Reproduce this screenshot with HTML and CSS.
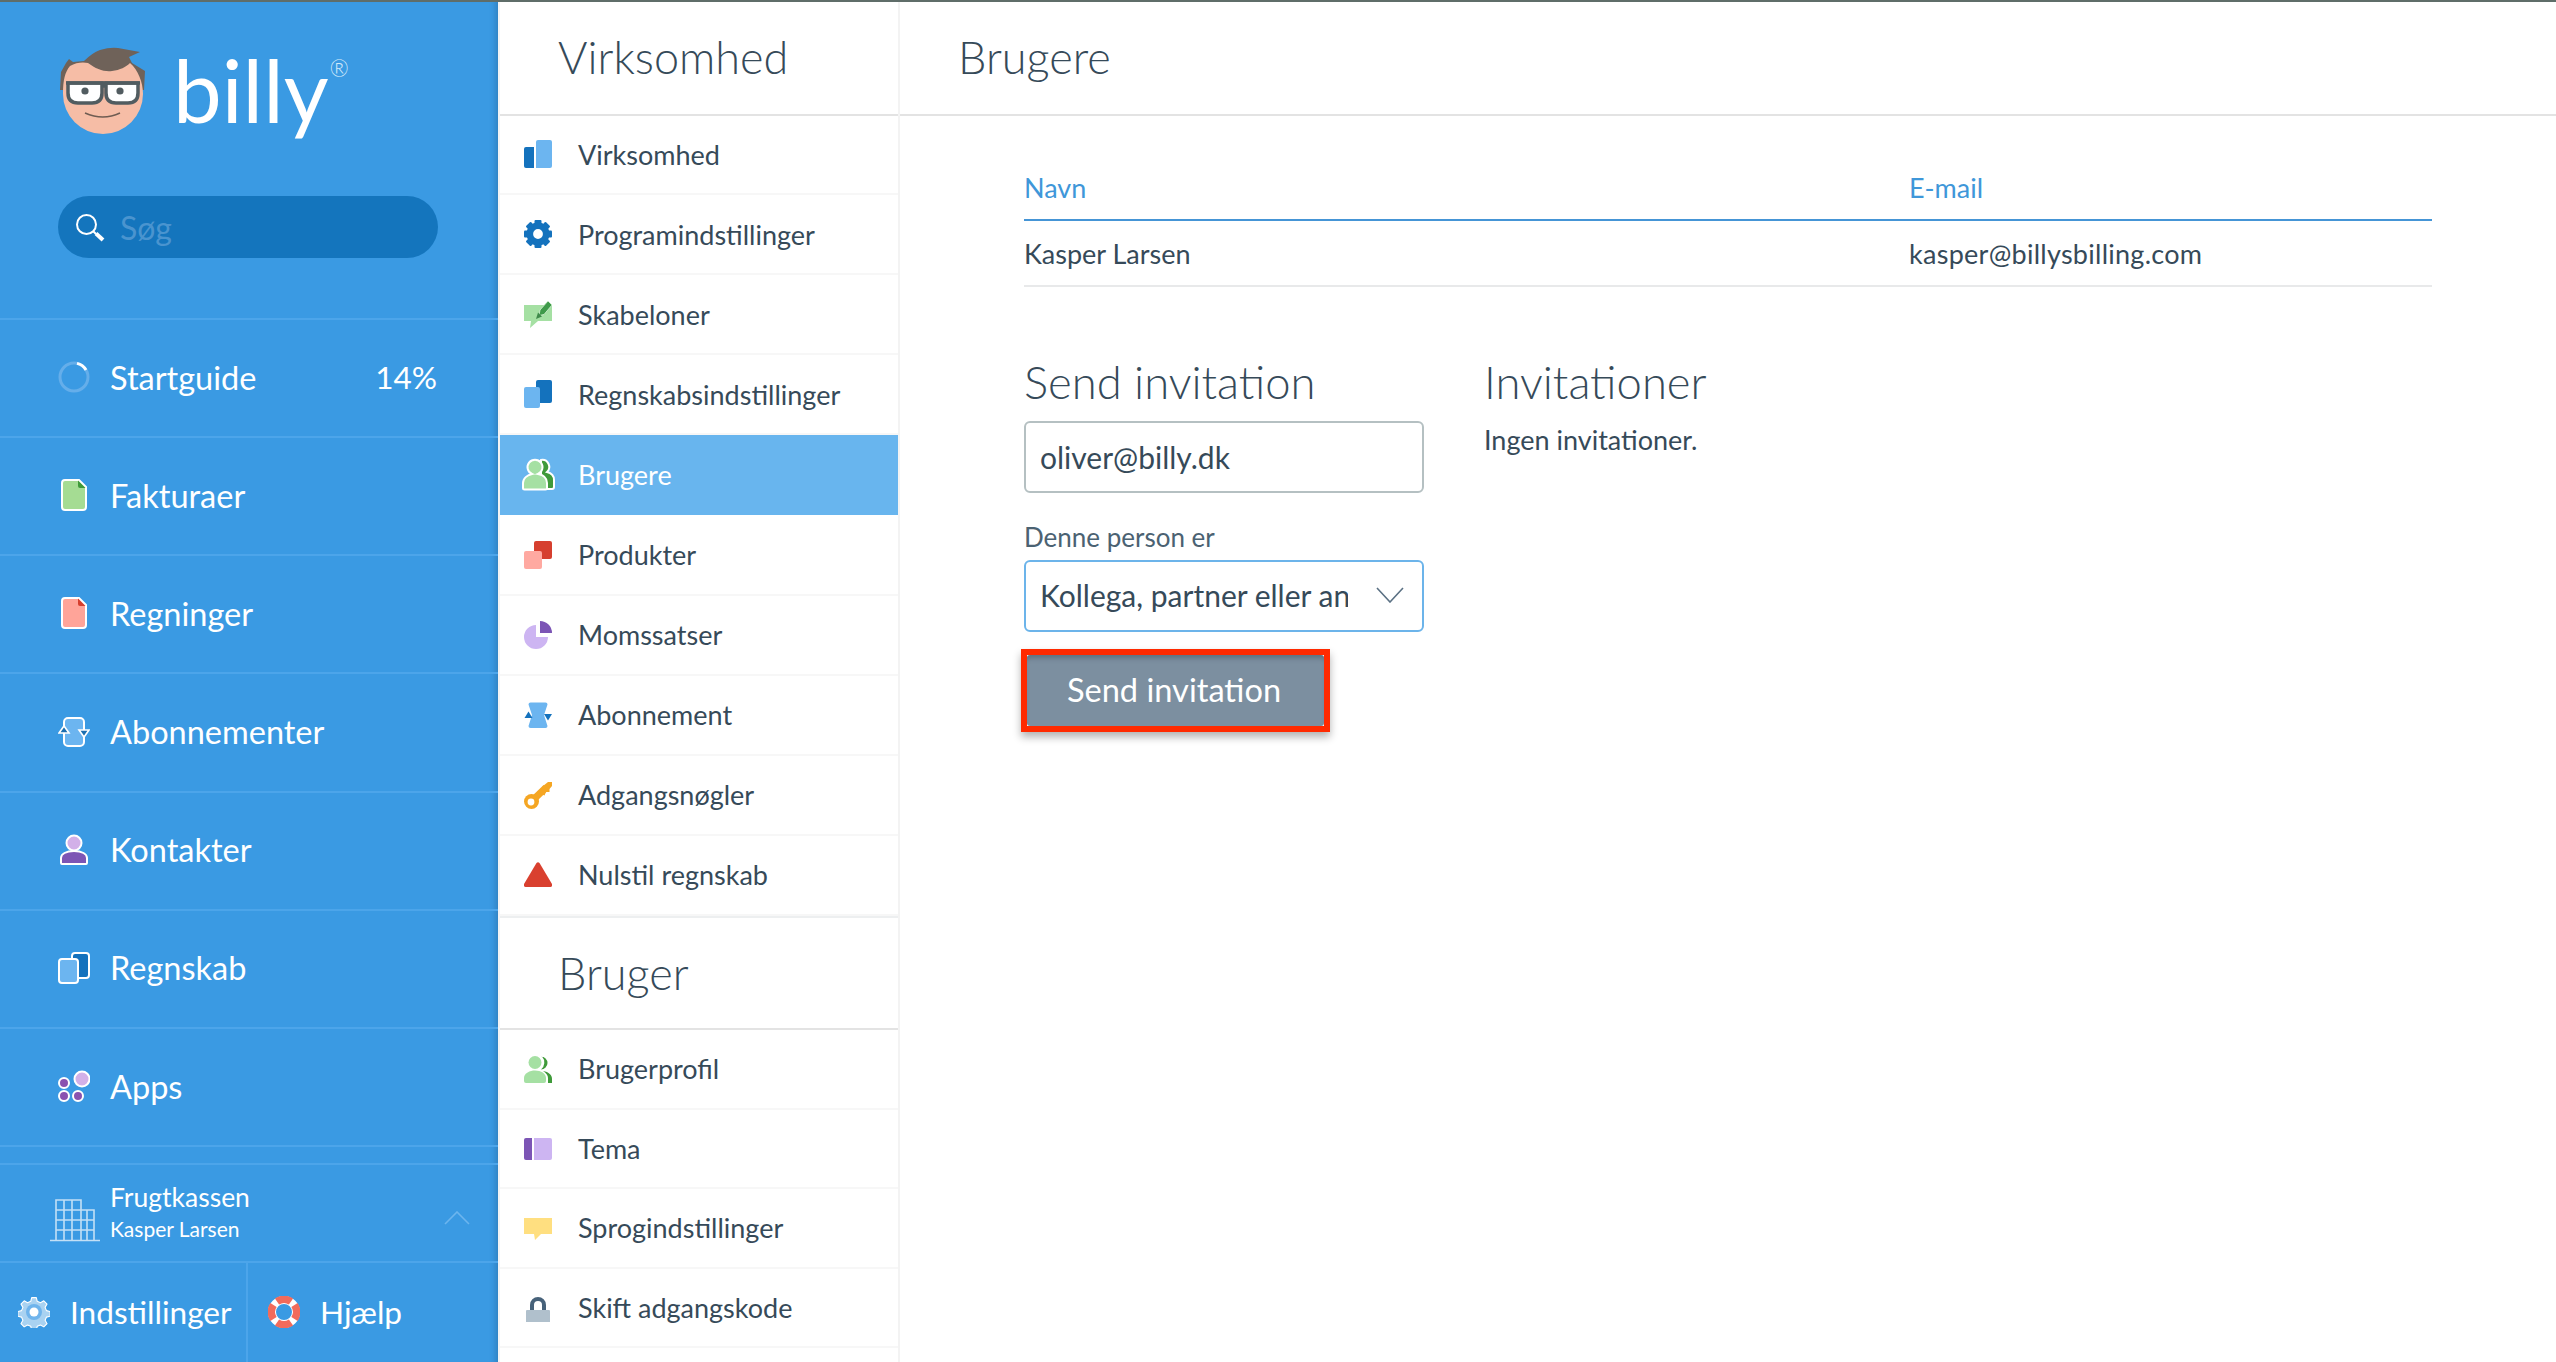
FILE: index.html
```html
<!DOCTYPE html>
<html lang="da">
<head>
<meta charset="utf-8">
<title>Billy - Brugere</title>
<link rel="stylesheet" href="styles.css">
</head>
<body>
<div class="topline"></div>
<div class="app">
  <aside class="sidebar">
    <div class="logo">
      <svg class="face" viewBox="58 45 90 95" width="90" height="95">
        <path d="M61 72 L66 63 L69 59 L73 62 L84 61 Q92 53 100 50 Q110 47 118 48 L140 52 L129 57 L132 63 L145 71 L144 90 L60 90 Z" fill="#6f6259"/>
        <path d="M63 94 C63 80 65 72 70 66 C76 62 84 62 88 63 C96 69 104 72 112 71 C120 70 126 67 130 63 C138 70 143 82 143 94 A40 40 0 0 1 63 94 Z" fill="#f6bda6"/>
        <path d="M68 83 H102 V93 Q102 103 92 103 H78 Q68 103 68 93Z" fill="#fff" stroke="#515c60" stroke-width="3.5"/>
        <path d="M106 83 H138 V93 Q138 103 128 103 H116 Q106 103 106 93Z" fill="#fff" stroke="#515c60" stroke-width="3.5"/>
        <path d="M66 83 H140 M102 86 H106" stroke="#515c60" stroke-width="3.5"/>
        <circle cx="85" cy="91" r="3.6" fill="#515c60"/>
        <circle cx="120" cy="91" r="3.6" fill="#515c60"/>
        <path d="M85 113 Q103 121 120 113" fill="none" stroke="#6f5c52" stroke-width="1.6"/>
      </svg>
      <span class="wordmark">billy</span><span class="reg">®</span>
    </div>
    <div class="search">
      <svg viewBox="0 0 30 32" width="30" height="32"><circle cx="10.5" cy="12.5" r="9.5" fill="none" stroke="#fff" stroke-width="2"/><path d="M17 19 L20 22" stroke="#fff" stroke-width="2"/><path d="M20 21.5 L27 28" stroke="#fff" stroke-width="4"/></svg>
      <span class="search-text">Søg</span>
    </div>
    <nav class="menu">
      <a class="menu-row">
        <svg viewBox="0 0 32 32" width="32" height="32"><circle cx="16" cy="16" r="14" fill="none" stroke="#65aeea" stroke-width="3"/><path d="M19 2.4 A14 14 0 0 1 28 9" fill="none" stroke="#fff" stroke-width="3"/></svg>
        <span>Startguide</span><span class="pct">14%</span>
      </a>
      <a class="menu-row">
        <svg viewBox="0 0 32 32" width="32" height="32"><path d="M7 1 H21 L28 8 V28 a3 3 0 0 1-3 3 H7 a3 3 0 0 1-3-3 V4 a3 3 0 0 1 3-3Z" fill="#a5dc93" stroke="#fff" stroke-width="2"/><path d="M20 1.5 L27.5 9 H22 a2 2 0 0 1-2-2Z" fill="#3f9a3a"/></svg>
        <span>Fakturaer</span>
      </a>
      <a class="menu-row">
        <svg viewBox="0 0 32 32" width="32" height="32"><path d="M7 1 H21 L28 8 V28 a3 3 0 0 1-3 3 H7 a3 3 0 0 1-3-3 V4 a3 3 0 0 1 3-3Z" fill="#ffa499" stroke="#fff" stroke-width="2"/><path d="M20 1.5 L27.5 9 H22 a2 2 0 0 1-2-2Z" fill="#d63f2f"/></svg>
        <span>Regninger</span>
      </a>
      <a class="menu-row">
        <svg viewBox="0 0 32 32" width="32" height="32"><rect x="6" y="2" width="20" height="28" rx="4" fill="#6cb5f0" stroke="#fff" stroke-width="2"/><path d="M1 17 L6 10 L11 17Z" fill="#1c6fb0" stroke="#fff" stroke-width="1.6"/><path d="M21 14 L31 14 L26 21Z" fill="#1c6fb0" stroke="#fff" stroke-width="1.6"/></svg>
        <span>Abonnementer</span>
      </a>
      <a class="menu-row">
        <svg viewBox="0 0 32 32" width="32" height="32"><path d="M3 29 V24 C3 20 8 17 16 17 C24 17 29 20 29 24 V29 a1 1 0 0 1-1 1 H4 a1 1 0 0 1-1-1Z" fill="#7c55b5" stroke="#fff" stroke-width="2"/><circle cx="16" cy="9" r="7.5" fill="#d2b0e8" stroke="#fff" stroke-width="2"/></svg>
        <span>Kontakter</span>
      </a>
      <a class="menu-row">
        <svg viewBox="0 0 32 32" width="32" height="32"><rect x="14" y="1" width="17" height="25" rx="3" fill="#1472bd" stroke="#fff" stroke-width="2"/><rect x="1" y="7" width="19" height="24" rx="3" fill="#6cb5f0" stroke="#fff" stroke-width="2"/></svg>
        <span>Regnskab</span>
      </a>
      <a class="menu-row">
        <svg viewBox="0 0 32 32" width="32" height="32"><circle cx="24" cy="9" r="7.5" fill="#d2b0e8" stroke="#fff" stroke-width="2"/><circle cx="6" cy="13" r="5" fill="#8a52b0" stroke="#fff" stroke-width="2"/><circle cx="6" cy="26" r="5" fill="#8a52b0" stroke="#fff" stroke-width="2"/><circle cx="20" cy="26" r="5" fill="#8a52b0" stroke="#fff" stroke-width="2"/></svg>
        <span>Apps</span>
      </a>
    </nav>
    <div class="account">
      <svg viewBox="0 0 50 44" width="50" height="44" fill="none" stroke="#c3e0f6" stroke-width="1.6"><path d="M0 42.5 H50 M6 42.5 V2 H31 V42.5 M31 12 H44 V42.5 M6 12 H31 M6 22 H44 M6 32 H44 M14 2 V42.5 M22 2 V42.5 M37 12 V42.5 M31 22 H44"/></svg>
      <div class="account-text">
        <div class="account-name">Frugtkassen</div>
        <div class="account-user">Kasper Larsen</div>
      </div>
      <svg class="chev" viewBox="0 0 26 14" width="26" height="14"><path d="M1 13 L13 1 L25 13" fill="none" stroke="#6cb5ee" stroke-width="1.6"/></svg>
    </div>
    <div class="foot">
      <a class="foot-item foot-settings">
        <svg viewBox="0 0 32 32" width="32" height="32"><path d="M13.5 0.5 h5 l1 4 l3.5 1.5 l3.6-2.1 l3.5 3.5 l-2.1 3.6 l1.5 3.5 l4 1 v5 l-4 1 l-1.5 3.5 l2.1 3.6 l-3.5 3.5 l-3.6-2.1 l-3.5 1.5 l-1 4 h-5 l-1-4 l-3.5-1.5 l-3.6 2.1 l-3.5-3.5 l2.1-3.6 l-1.5-3.5 l-4-1 v-5 l4-1 l1.5-3.5 l-2.1-3.6 l3.5-3.5 l3.6 2.1 l3.5-1.5Z" fill="#a9d2f1" stroke="#fff" stroke-width="1.2" stroke-linejoin="round" transform="translate(1.2 1.2) scale(.925)"/><circle cx="16" cy="16" r="8" fill="#6fb4ec"/><circle cx="16" cy="16" r="4.5" fill="#fff"/></svg>
        <span>Indstillinger</span>
      </a>
      <a class="foot-item foot-help">
        <svg viewBox="0 0 32 32" width="32" height="32"><circle cx="16" cy="16" r="12" fill="none" stroke="#fff" stroke-width="8"/><g fill="none" stroke="#f26b5b" stroke-width="7.5"><path d="M9 5.5 A12.6 12.6 0 0 1 23 5.5"/><path d="M9 26.5 A12.6 12.6 0 0 0 23 26.5"/><path d="M5.5 9 A12.6 12.6 0 0 0 5.5 23"/><path d="M26.5 9 A12.6 12.6 0 0 1 26.5 23"/></g></svg>
        <span>Hjælp</span>
      </a>
    </div>
  </aside>

  <nav class="subnav">
    <h2 class="subnav-title">Virksomhed</h2>
    <ul class="subnav-list">
      <li class="sub-row"><svg viewBox="0 0 28 28" width="28" height="28"><path d="M2 7 H10 V28 H2 a2 2 0 0 1-2-2 V9 a2 2 0 0 1 2-2Z" fill="#1472bd"/><path d="M14 0 H26 a2 2 0 0 1 2 2 V26 a2 2 0 0 1-2 2 H12 V2 a2 2 0 0 1 2-2Z" fill="#6cb5f0"/></svg><span>Virksomhed</span></li>
      <li class="sub-row"><svg viewBox="0 0 28 28" width="28" height="28"><circle cx="14" cy="14" r="8.2" fill="none" stroke="#1472bd" stroke-width="6.6"/><g fill="#1472bd"><rect x="10.5" y="0" width="7" height="5" rx="1"/><rect x="10.5" y="23" width="7" height="5" rx="1"/><rect x="0" y="10.5" width="5" height="7" rx="1"/><rect x="23" y="10.5" width="5" height="7" rx="1"/><rect x="10.5" y="0" width="7" height="5" rx="1" transform="rotate(45 14 14)"/><rect x="10.5" y="23" width="7" height="5" rx="1" transform="rotate(45 14 14)"/><rect x="0" y="10.5" width="5" height="7" rx="1" transform="rotate(45 14 14)"/><rect x="23" y="10.5" width="5" height="7" rx="1" transform="rotate(45 14 14)"/></g></svg><span>Programindstillinger</span></li>
      <li class="sub-row"><svg viewBox="0 0 28 28" width="28" height="28"><path d="M0 5 H28 V21 H14 L6 28 L7 21 H0Z" fill="#a5e0a3"/><path d="M15 15.5 L16 10 L24 1 L28 5 L20 14.5Z" fill="#3f9a4a" stroke="#d6f0d4" stroke-width=".8"/><path d="M12 19 L14 12.5 L18 16.5Z" fill="#3f8a4a"/></svg><span>Skabeloner</span></li>
      <li class="sub-row"><svg viewBox="0 0 28 28" width="28" height="28"><path d="M14 0 H26 a2 2 0 0 1 2 2 V21 a2 2 0 0 1-2 2 H12 V2 a2 2 0 0 1 2-2Z" fill="#1472bd"/><rect x="0" y="7" width="16" height="21" rx="2" fill="#6cb5f0"/></svg><span>Regnskabsindstillinger</span></li>
      <li class="sub-row sub-active"><svg viewBox="0 0 34 34" width="34" height="34"><path d="M20 3 a7 7 0 0 1 6 12 C30 16 33 19 33 23 V30 a2 2 0 0 1-2 2 H20Z" fill="#3f9a3a" stroke="#fff" stroke-width="2"/><path d="M2 31 V26 C2 21 7 18 11 17 A7.5 7.5 0 1 1 17 17 C22 18 26 21 26 26 V31 a1.5 1.5 0 0 1-1.5 1.5 H3.5 a1.5 1.5 0 0 1-1.5-1.5Z" fill="#a5e0a3" stroke="#fff" stroke-width="2"/></svg><span>Brugere</span></li>
      <li class="sub-row"><svg viewBox="0 0 28 28" width="28" height="28"><rect x="10" y="0" width="18" height="18" rx="2" fill="#d63f2f"/><rect x="0" y="10" width="18" height="18" rx="2" fill="#ffa9a1"/></svg><span>Produkter</span></li>
      <li class="sub-row"><svg viewBox="0 0 28 28" width="28" height="28"><path d="M12 4 V16 H24 A12 12 0 1 1 12 4Z" fill="#cdb5f2"/><path d="M16 0 A12 12 0 0 1 28 12 H16Z" fill="#7c55b5"/></svg><span>Momssatser</span></li>
      <li class="sub-row"><svg viewBox="0 0 28 28" width="28" height="28"><path d="M4.5 3.5 a2 2 0 0 1 2-2 H21.5 a2 2 0 0 1 2 2 L20 14 L23.5 25 a2 2 0 0 1-2 2 H6.5 a2 2 0 0 1-2-2 L8 14Z" fill="#6cb5f0"/><path d="M0.5 17 L4.5 10.5 L8.5 17Z" fill="#1472bd"/><path d="M20 13 H28 L24 19.5Z" fill="#1472bd"/></svg><span>Abonnement</span></li>
      <li class="sub-row"><svg viewBox="0 0 28 28" width="28" height="28"><circle cx="7.5" cy="20.5" r="7.5" fill="#f5a623"/><path d="M9 19 L22 6.5" stroke="#f5a623" stroke-width="7"/><path d="M19 5 L24 1 H28 V5 L25.5 8 L25.5 11 L22 11 L20.5 14.5 L15 12Z" fill="#f5a623"/><circle cx="7" cy="21" r="3.4" fill="#fff"/></svg><span>Adgangsnøgler</span></li>
      <li class="sub-row"><svg viewBox="0 0 28 28" width="28" height="28"><path d="M12.5 2 a2 2 0 0 1 3 0 L28 23 a2 2 0 0 1-1.5 3 H1.5 a2 2 0 0 1-1.5-3Z" fill="#d9402f"/></svg><span>Nulstil regnskab</span></li>
    </ul>
    <h2 class="subnav-title subnav-title-second">Bruger</h2>
    <ul class="subnav-list subnav-list-second">
      <li class="sub-row"><svg viewBox="0 0 28 28" width="28" height="28"><path d="M17 1.5 a6.5 6.5 0 0 1 0 13 a9 9 0 0 0 1-13Z" fill="#3f9a3a"/><path d="M19 16 C25 17 28 20 28 24 V28 H24 V23 C24 20 22 18 19 16Z" fill="#3f9a3a"/><circle cx="11" cy="7.5" r="6.5" fill="#a5e0a3"/><path d="M0 26 V23 C0 18 6 15.5 11 15.5 C17 15.5 22 18.5 22 23 V26 a2 2 0 0 1-2 2 H2 a2 2 0 0 1-2-2Z" fill="#a5e0a3"/></svg><span>Brugerprofil</span></li>
      <li class="sub-row"><svg viewBox="0 0 28 28" width="28" height="28"><path d="M2 4 H8 V26 H2 a2 2 0 0 1-2-2 V6 a2 2 0 0 1 2-2Z" fill="#7c55b5"/><path d="M10 4 H26 a2 2 0 0 1 2 2 V24 a2 2 0 0 1-2 2 H10Z" fill="#cdb5f2"/></svg><span>Tema</span></li>
      <li class="sub-row"><svg viewBox="0 0 28 28" width="28" height="28"><path d="M0 4 H28 V20 H17 L11 26 L10 20 H0Z" fill="#ffdf80"/></svg><span>Sprogindstillinger</span></li>
      <li class="sub-row"><svg viewBox="0 0 28 28" width="28" height="28"><path d="M6 16 V11 a8 8 0 0 1 16 0 V16 H18 V11 a4 4 0 0 0-8 0 V16Z" fill="#47627a"/><rect x="2" y="16" width="24" height="12.5" rx="1" fill="#b0c0cc"/></svg><span>Skift adgangskode</span></li>
    </ul>
  </nav>

  <main class="main">
    <header class="main-head"><h1>Brugere</h1></header>
    <div class="content">
      <div class="table">
        <div class="th">Navn</div><div class="th">E-mail</div>
        <div class="td">Kasper Larsen</div><div class="td td-email">kasper@billysbilling.com</div>
      </div>
      <div class="columns">
        <section class="invite">
          <h3 class="section-title">Send invitation</h3>
          <div class="field">oliver@billy.dk</div>
          <div class="label">Denne person er</div>
          <div class="field field-select">
            <span class="select-text">Kollega, partner eller anden</span>
            <svg viewBox="0 0 28 16" width="28" height="16"><path d="M1 1 L14 15 L27 1" fill="none" stroke="#5b7184" stroke-width="1.6"/></svg>
          </div>
          <div class="btn-mark"><button class="btn">Send invitation</button></div>
        </section>
        <section class="invitations">
          <h3 class="section-title">Invitationer</h3>
          <p class="empty">Ingen invitationer.</p>
        </section>
      </div>
    </div>
  </main>
</div>
</body>
</html>
```
FILE: styles.css
```css
* { box-sizing: border-box; }
html, body { margin: 0; height: 100%; }
body {
  font-family: "Lato", "Noto Sans", sans-serif;
  background: #fff;
  color: #364a59;
  overflow: hidden;
}
.topline { height: 2px; background: #5f6d69; }
.app { display: flex; height: 1360px; }

/* sidebar */
.sidebar {
  width: 498px;
  flex: none;
  background: #3a9ae3;
  color: #fff;
  display: flex;
  flex-direction: column;
  box-shadow: inset -8px 0 6px -6px rgba(20, 60, 100, .3);
}
.logo {
  height: 194px;
  padding: 43px 0 0 58px;
  display: flex;
  align-items: flex-start;
}
.face { display: block; flex: none; }
.wordmark {
  font-size: 87px;
  line-height: 88px;
  margin: 1px 0 0 25px;
}
.reg { font-size: 23px; font-weight: 300; line-height: 23px; margin: 12px 0 0 1px; color: #d5eafa; }
.search {
  width: 380px;
  height: 62px;
  margin-left: 58px;
  border-radius: 31px;
  background: #1475bd;
  display: flex;
  align-items: center;
  padding-left: 18px;
  gap: 14px;
}
.search svg { margin-top: 2px; }
.search-text { font-size: 32px; color: #4a94cf; }
.menu { margin-top: 60px; border-top: 2px solid #4ca5ea; }
.menu-row {
  height: 118.17px;
  border-bottom: 2px solid #4ca5ea;
  display: flex;
  align-items: center;
  padding: 0 61px 2px 58px;
  gap: 20px;
  font-size: 32.5px;
}
.pct { margin-left: auto; font-size: 31.5px; }
.account {
  margin-top: 16px;
  border-top: 2px solid #4ca5ea;
  border-bottom: 2px solid #4ca5ea;
  height: 100px;
  display: flex;
  align-items: center;
  padding-left: 50px;
}
.account > svg:first-child { margin-top: 14px; }
.account-text { margin: 0 0 2px 10px; }
.account-name { font-size: 26.5px; line-height: 32px; }
.account-user { font-size: 21px; line-height: 31px; }
.chev { margin-left: auto; margin-right: 28px; margin-top: 10px; }
.foot { display: flex; flex: 1; }
.foot-item {
  display: flex;
  align-items: center;
  font-size: 31.6px;
  padding-bottom: 1px;
}
.foot-settings { width: 248px; padding-left: 18px; gap: 20px; border-right: 2px solid #4ca5ea; }
.foot-help { padding-left: 20px; gap: 20px; }

/* sub navigation */
.subnav { width: 400px; flex: none; background: #fff; border-left: 2px solid #f4f4f4; }
.subnav-title {
  margin: 0;
  height: 114px;
  padding-left: 58px;
  font-size: 45px;
  font-weight: 300;
  line-height: 110px;
  border-bottom: 2px solid #e3e3e3;
}
.subnav-title-second { height: 114px; line-height: 111px; border-top: 2px solid #edeff0; }
.subnav-list { list-style: none; margin: -1px 0 0; padding: 0; }
.subnav-list-second { margin-top: 0; }
.sub-row {
  height: 80.1px;
  display: flex;
  align-items: center;
  padding-left: 24px;
  gap: 26px;
  font-size: 27px;
  border-bottom: 2px solid #f7f7f7;
}
.subnav-list-second .sub-row { height: 79.6px; }
.sub-row svg { flex: none; display: block; }
.sub-active { background: #68b5ee; color: #fff; border-bottom: 0; padding-bottom: 2px; }
.sub-active svg { margin: 0 -3px; }

/* main */
.main { flex: 1; min-width: 0; border-left: 2px solid #f3f3f3; }
.main-head { height: 114px; border-bottom: 2px solid #e3e3e3; padding-left: 58px; }
.main-head h1 { margin: 0; font-size: 45px; font-weight: 300; line-height: 110px; }
.content { padding: 39px 124px 0 124px; width: 1656px; }
.table {
  display: grid;
  grid-template-columns: 885px 1fr;
  font-size: 27px;
}
.th {
  color: #3f97d9;
  height: 66px;
  line-height: 66px;
  border-bottom: 2px solid #4595d6;
}
.td {
  height: 66px;
  line-height: 66px;
  border-bottom: 2px solid #e8e9ea;
}
.td-email { letter-spacing: .27px; }
.columns { display: grid; grid-template-columns: 460px 1fr; margin-top: 60px; }
.section-title { margin: 0; font-size: 45.4px; font-weight: 300; line-height: 70px; }
.invite { width: 400px; }
.field {
  height: 72px;
  border: 2px solid #b5c0c2;
  border-radius: 6px;
  display: flex;
  align-items: center;
  padding-left: 14px;
  font-size: 30px;
  margin-top: 4px;
}
.label { font-size: 26px; color: #4b6272; margin-top: 25px; line-height: 38px; }
.field-select { border-color: #6cb4ea; margin-top: 4px; padding: 0 18px 3px 14px; justify-content: space-between; }
.select-text { width: 308px; overflow: hidden; white-space: nowrap; }
.btn-mark {
  width: 309px;
  height: 83px;
  margin: 17px 0 0 -3px;
  border: 6px solid #ff2a00;
  box-shadow: 0 5px 8px rgba(0, 0, 0, .3);
}
.btn {
  display: block;
  width: 100%;
  height: 100%;
  background: #7c8fa0;
  border: 0;
  border-radius: 3px;
  box-shadow: inset 0 6px 5px -3px rgba(60, 75, 85, .45);
  color: #fff;
  font: 400 32.6px "Lato", "Noto Sans", sans-serif;
  padding: 0 3px 3px 0;
}
.empty { margin: 5px 0 0; font-size: 27px; line-height: 36px; }
```
